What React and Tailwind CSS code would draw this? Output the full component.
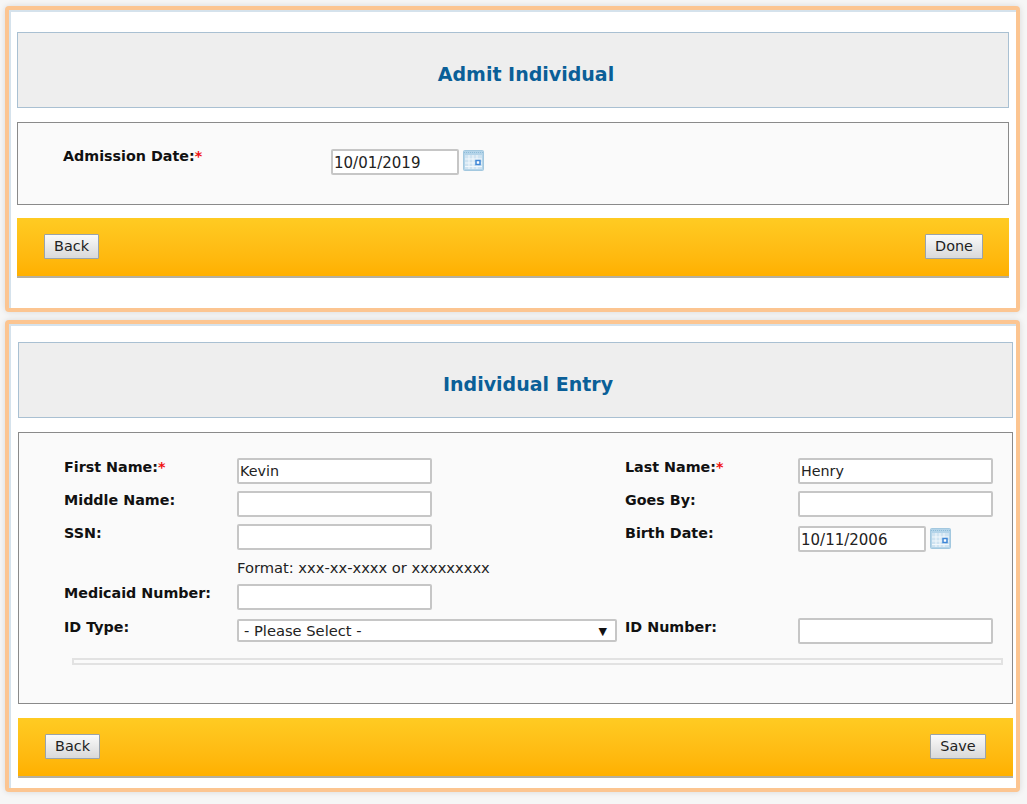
const labelCls = "font-bold text-[14.3px] leading-[18px] text-[#111]";
const inputCls = "w-[195px] h-[26px] border-2 border-[#c6c6c6] rounded-[2px] bg-white pl-[1px] text-[14.3px] text-[#222] outline-none font-['DejaVu_Sans',sans-serif]";
const dateCls = "w-[128px] h-[26px] border-2 border-[#c6c6c6] rounded-[2px] bg-white pl-[1px] pt-[2px] text-[15px] text-[#222] outline-none";

function Star() {
  return <span className="text-[#f01010]">*</span>;
}

function CalendarIcon() {
  return (
    <svg width="21" height="21" viewBox="0 0 21 21" className="shrink-0">
      <rect x="0.5" y="0.5" width="20" height="20" rx="1" fill="#b4d4e9" stroke="#a3c8df" />
      <path d="M1 2.500h19" stroke="#8fbcd8" strokeWidth="1" strokeDasharray="1 1" />
      <rect x="2" y="5" width="17" height="14" fill="#cfe3f1" />
      <path d="M2 9h17M2 13h17M2 16.500h17M6 5v14M10 5v14M14 5v14" stroke="#f2f8fc" strokeWidth="1" />
      <rect x="13" y="10.500" width="4" height="4" fill="#fff" stroke="#3f86d6" strokeWidth="1.500" />
    </svg>
  );
}

function Btn({ children, w }) {
  return (
    <button className={`${w} h-[25px] mb-[2px] border border-[#9aa3ab] rounded-[1px] bg-gradient-to-b from-[#fafafa] to-[#d9d9d9] text-[14.4px] text-[#222] leading-none`}>
      {children}
    </button>
  );
}

function Title({ children, offset }) {
  return (
    <div className={`h-[76px] border border-[#a9c0d2] bg-[#eeeeee] flex items-center justify-center pt-[9px] ${offset}`}>
      <h1 className="text-[19px] font-bold text-[#0a5f98]">{children}</h1>
    </div>
  );
}

function Footer({ children }) {
  return (
    <div className="h-[60px] bg-gradient-to-b from-[#ffcb22] to-[#ffb000] border-b-2 border-[#b5b0a0] flex items-center justify-between">
      {children}
    </div>
  );
}

function Field({ label, star, children }) {
  return (
    <>
      <div className={`${labelCls} w-[173px]`}>
        {label}
        {star && <Star />}
      </div>
      {children}
    </>
  );
}

export default function App() {
  return (
    <div className="w-[1027px] h-[804px] bg-[#f6f6f6] pt-[6px] pl-[5px] font-['DejaVu_Sans',sans-serif] overflow-hidden">
      {/* admit panel */}
      <div className="w-[1015px] h-[306px] border-4 border-[#fcc591] rounded-[4px] bg-white shadow-[0_0_6px_rgba(0,0,0,0.12)]">
        <div className="h-full border-l-2 border-t-2 border-[#d5e2ec] pt-[20px] pl-[6px]">
          <div className="w-[992px]">
            <Title offset="pl-[26px]">Admit Individual</Title>
            <div className="mt-[14px] h-[83px] border border-[#8a8a8a] bg-[#fafafa] flex pl-[45px] pt-[24px]">
              <div className={`${labelCls} w-[268px]`}>
                Admission Date:<Star />
              </div>
              <input className={`${dateCls} mt-[2px]`} defaultValue="10/01/2019" />
              <div className="ml-[4px] mt-[3px]"><CalendarIcon /></div>
            </div>
            <div className="mt-[13px]">
              <Footer>
                <div className="pl-[27px]"><Btn w="w-[55px]">Back</Btn></div>
                <div className="pr-[26px]"><Btn w="w-[58px]">Done</Btn></div>
              </Footer>
            </div>
          </div>
        </div>
      </div>

      {/* entry panel */}
      <div className="mt-[8px] w-[1015px] h-[472px] border-4 border-[#fcc591] rounded-[4px] bg-white shadow-[0_0_6px_rgba(0,0,0,0.12)]">
        <div className="h-full border-l-2 border-t-2 border-[#d5e2ec] pt-[16px] pl-[7px]">
          <div className="w-[995px]">
            <Title offset="pl-[25px]">Individual Entry</Title>
            <div className="mt-[14px] h-[272px] border border-[#8a8a8a] bg-[#fafafa] pl-[45px] pt-[25px]">
              <div className="flex flex-col">
                <div className="flex h-[26px]">
                  <Field label="First Name:" star><input className={inputCls} defaultValue="Kevin" /></Field>
                  <div className="w-[193px]" />
                  <Field label="Last Name:" star><input className={inputCls} defaultValue="Henry" /></Field>
                </div>
                <div className="flex h-[26px] mt-[7px]">
                  <Field label="Middle Name:"><input className={inputCls} /></Field>
                  <div className="w-[193px]" />
                  <Field label="Goes By:"><input className={inputCls} /></Field>
                </div>
                <div className="flex h-[26px] mt-[7px]">
                  <Field label="SSN:"><input className={inputCls} /></Field>
                  <div className="w-[193px]" />
                  <Field label="Birth Date:">
                    <input className={`${dateCls} mt-[2px]`} defaultValue="10/11/2006" />
                    <div className="ml-[4px] mt-[4px]"><CalendarIcon /></div>
                  </Field>
                </div>
                <div className="h-[34px] pl-[173px] flex items-center text-[14.7px] text-[#222] pt-[3px]">
                  Format: xxx-xx-xxxx or xxxxxxxxx
                </div>
                <div className="flex h-[26px]">
                  <Field label="Medicaid Number:"><input className={inputCls} /></Field>
                </div>
                <div className="flex h-[26px] mt-[8px]">
                  <Field label="ID Type:">
                    <div className="relative w-[380px] h-[23px] mt-[1px] border-2 border-[#c6c6c6] rounded-[2px] bg-white pl-[5px] text-[14.7px] leading-[20px] text-[#222]">
                      - Please Select -
                      <span className="absolute right-[8px] top-[1px] text-[11px] text-[#111]">▼</span>
                    </div>
                  </Field>
                  <div className="w-[8px]" />
                  <Field label="ID Number:"><input className={inputCls} /></Field>
                </div>
              </div>
              <div className="mt-[14px] ml-[8px] w-[931px] h-[7px] border-2 border-[#e2e2e2]" />
            </div>
            <div className="mt-[14px]">
              <Footer>
                <div className="pl-[27px]"><Btn w="w-[55px]">Back</Btn></div>
                <div className="pr-[27px]"><Btn w="w-[56px]">Save</Btn></div>
              </Footer>
            </div>
          </div>
        </div>
      </div>
    </div>
  );
}
